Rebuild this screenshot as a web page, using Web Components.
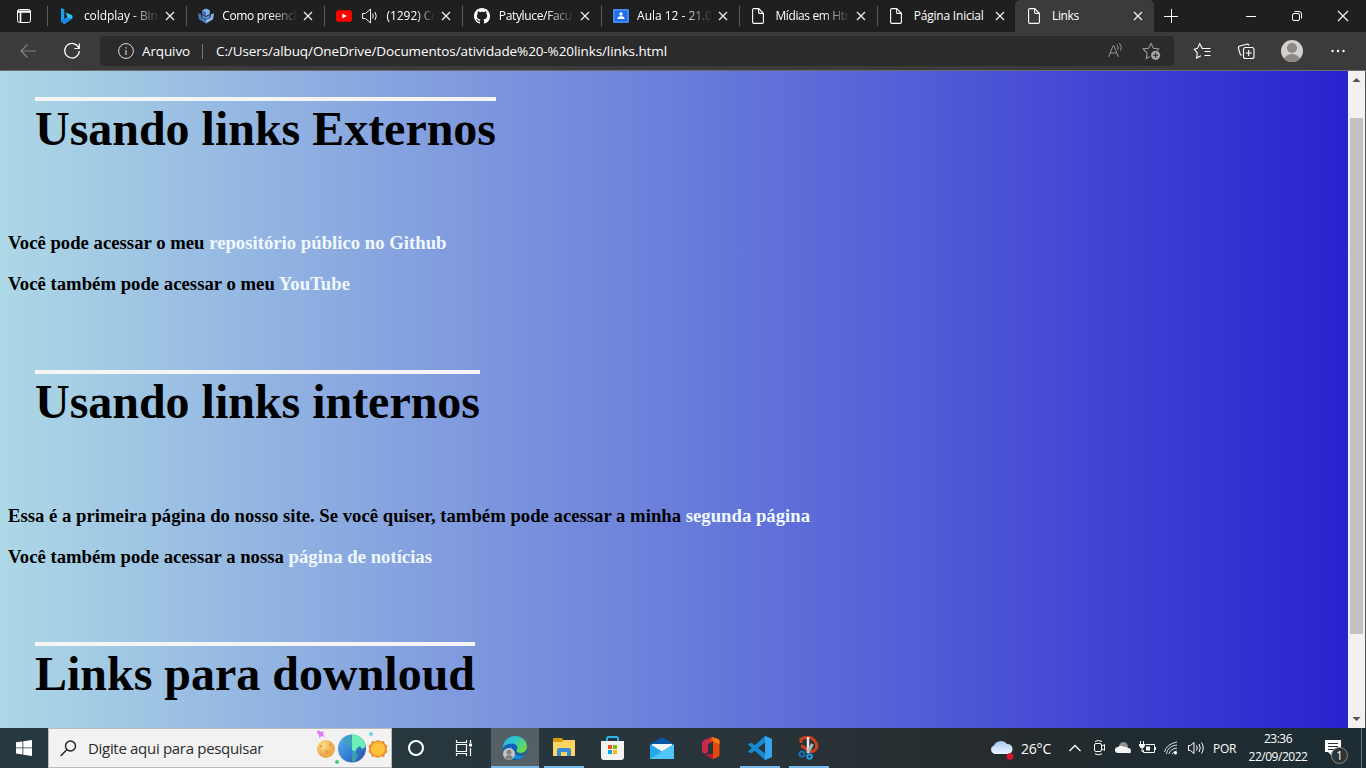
<!DOCTYPE html>
<html lang="pt-BR">
<head>
<meta charset="utf-8">
<title>Links</title>
<style>
html,body{margin:0;height:100%;overflow:hidden}
body{font-family:"Open Sans","Noto Sans",sans-serif;font-size:12px;color:#fff}
</style>
</head>
<body>
<desktop-screen></desktop-screen>
<script>
const define = (name, html) => {
  const t = document.createElement('template');
  t.innerHTML = html;
  customElements.define(name, class extends HTMLElement {
    constructor() {
      super();
      this.attachShadow({mode: 'open'}).appendChild(t.content.cloneNode(true));
    }
  });
};

const PAGE_ICON = '<svg slot="icon" width="16" height="16" viewBox="0 0 16 16" fill="none" stroke="#fff" stroke-width="1.1"><path d="M3 .6h4.700l4.700 4.700v8.800a1.300 1.300 0 0 1-1.300 1.300H2.900a1.300 1.300 0 0 1-1.300-1.300V1.900A1.300 1.300 0 0 1 3 .6zM7.600.8v3.600a1 1 0 0 0 1 1h3.600"/></svg>';

define('browser-tab', `<style>
:host{display:flex;align-items:center;box-sizing:border-box;flex:none;width:138.3px;height:32px;position:relative;padding-left:11px;border-left:1px solid transparent}
:host::before{content:"";position:absolute;left:-1px;top:6px;width:1px;height:20px;background:#5d5d5d}
:host([active]){background:#3b3b3b;border:0;padding-left:12px;border-radius:5px 5px 0 0}
:host([active])::before{display:none}
.label{flex:none;width:74px;margin-left:8.500px;height:20px;line-height:20px;overflow:hidden;white-space:nowrap}
:host([fade]) .label{-webkit-mask-image:linear-gradient(90deg,#000 64%,transparent 102%);mask-image:linear-gradient(90deg,#000 64%,transparent 102%)}
:host([sound]) .label{width:48px}
.sound{display:none;margin-left:9px}
:host([sound]) .sound{display:block}
.x{margin-left:7px;flex:none}
</style><slot name="icon"></slot>
<svg class="sound" width="17" height="16" viewBox="0 0 17 16" fill="none" stroke="#eee"><path d="M1.500 5.500h3L9.500 1v14L4.500 10.500h-3zM11.500 5.500q1.500 2.500 0 5M14 4q2.500 4 0 8"/></svg>
<div class="label"><slot></slot></div>
<svg class="x" width="10" height="10" viewBox="0 0 10 10" stroke="#f2f2f2" stroke-width="1.200"><path d="M1 1l8 8M9 1l-8 8"/></svg>`);

define('tab-strip', `<style>
:host{display:flex;height:32px;background:#1f1f1f;align-items:center}
.menu{width:47.4px;flex:none;height:32px;display:grid;place-items:center}
.tools{flex:1;display:flex;justify-content:space-between}
.new{width:35px;height:32px;display:grid;place-items:center}
.win{display:flex}.win svg{display:block}
</style>
<div class="menu"><svg width="16" height="16" viewBox="0 0 16 16" fill="none" stroke="#fff"><rect x="1.500" y="1.500" width="13" height="13" rx="2"/><path d="M1.500 3.200h13M2 4h12M4.500 4v10" stroke-width="1.600"/></svg></div>
<browser-tab fade><svg slot="icon" width="16" height="16" viewBox="0 0 16 16"><path d="M2 0l3.300 1.200v9.600L2 13z" fill="#1ba0f0"/><path d="M2 13l3.300-2 8-3.200v2.600L5.300 16z" fill="#1479e0"/><path d="M6.500 4.500l6.800 2.800v3.100L5.300 16 2 13l6.500-3.700z" fill="#2fc4f2"/><path d="M5.300 16L2 13l3.400-2 4-1 3.500.6z" fill="#1685ea"/></svg><fit-text w="74">coldplay - Bin</fit-text></browser-tab>
<browser-tab fade><svg slot="icon" width="16" height="16" viewBox="0 0 17 16"><path d="M8.500 0l4 2v4l-4 2-4-2V2z" fill="#7fb2ee"/><path d="M4.500 2l4 2v4l-4-2z" fill="#3f6fb8"/><path d="M0 5l3.500 1.500v3L8.500 12v4L1 11.500z" fill="#4878bd"/><path d="M17 5l-3.500 1.500v3L8.500 12v4L16 11.500z" fill="#8bb4e8"/><path d="M4.500 7l4 2 4-2v2.500l-4 2-4-2z" fill="#5c8fd2"/></svg><fit-text w="74">Como preencl</fit-text></browser-tab>
<browser-tab fade sound><svg slot="icon" width="16" height="16" viewBox="0 0 16 16"><rect y="2.200" width="16" height="11.600" rx="2.600" fill="#f00"/><path d="M6.300 5.500v5l4.400-2.500z" fill="#fff"/></svg><fit-text w="52">(1292) Co</fit-text></browser-tab>
<browser-tab fade><svg slot="icon" width="16" height="16" viewBox="0 0 16 16"><path fill="#fff" d="M8 0C3.580 0 0 3.580 0 8c0 3.540 2.290 6.530 5.470 7.590.4.070.550-.170.550-.380 0-.190-.010-.820-.010-1.490-2.010.370-2.530-.490-2.690-.940-.090-.230-.480-.940-.820-1.130-.280-.150-.680-.520-.010-.530.630-.010 1.080.580 1.230.820.720 1.210 1.870.870 2.330.660.070-.520.280-.870.510-1.070-1.780-.200-3.640-.890-3.640-3.950 0-.870.310-1.590.820-2.150-.080-.200-.360-1.020.080-2.120 0 0 .670-.210 2.200.820.640-.180 1.320-.270 2-.270s1.360.090 2 .270c1.530-1.040 2.200-.820 2.200-.820.440 1.100.160 1.920.080 2.120.510.560.820 1.270.820 2.150 0 3.070-1.870 3.750-3.650 3.950.290.250.540.730.540 1.480 0 1.070-.010 1.930-.010 2.200 0 .210.150.460.550.380A8.010 8.010 0 0 0 16 8c0-4.420-3.580-8-8-8z"/></svg><fit-text w="73">Patyluce/Facu</fit-text></browser-tab>
<browser-tab fade><svg slot="icon" width="16" height="16" viewBox="0 0 16 16"><rect y="1" width="16" height="14" rx="1.300" fill="#4285f4"/><rect x="2" y="3" width="12" height="10" fill="#1c6fe4"/><circle cx="8" cy="6" r="1.700" fill="#fff"/><path d="M4.500 11V10.200C4.500 8.800 6.400 8.200 8 8.200s3.500.6 3.500 2v.8z" fill="#fff"/></svg><fit-text w="75">Aula 12 - 21.0</fit-text></browser-tab>
<browser-tab fade>${PAGE_ICON}<fit-text w="80">Mídias em Htm</fit-text></browser-tab>
<browser-tab>${PAGE_ICON}<fit-text w="70">Página Inicial</fit-text></browser-tab>
<browser-tab active>${PAGE_ICON}<fit-text w="27">Links</fit-text></browser-tab>
<div class="tools"><div class="new"><svg width="14" height="14" viewBox="0 0 14 14" stroke="#fff"><path d="M0 7.500h14M7.500 0v14"/></svg></div>
<div class="win"><svg width="46" height="32" stroke="#fff"><path d="M18 16.500h10"/></svg>
<svg width="46" height="32" fill="none" stroke="#fff"><rect x="18.500" y="13.500" width="7" height="7" rx="1.500"/><path d="M20.500 11.500h4.500q2.500 0 2.500 2.500v4.500"/></svg>
<svg width="46" height="32" stroke="#fff" stroke-width="1.100"><path d="M18 11l10 10M28 11L18 21"/></svg></div></div>`);

define('tool-bar', `<style>
:host{display:flex;height:38px;box-sizing:border-box;background:#3b3b3b;padding:0 6px;align-items:center;font-size:13.500px}
svg{display:block;flex:none}
.addr{display:flex;align-items:center;width:1074px;height:30px;margin:0 6px;background:#2b2b2b;border-radius:4px;box-sizing:border-box;padding-left:18px}
.addr fit-text{line-height:28px}
.kind{margin-left:8px;width:48px;display:flex}
.sep{width:1px;height:15px;background:#777;margin:0 13px 0 12px}
.grow{flex:1}
</style>
<svg width="44" height="38" fill="none" stroke="#818181" stroke-width="1.200"><path d="M30 19H15M21.500 12.500L15 19l6.500 6.500"/></svg>
<svg width="44" height="38" fill="none" stroke="#fff" stroke-width="1.200"><path d="M28.800 16A7.300 7.300 0 1 0 29.300 19M29.300 11.500v5h-5"/></svg>
<div class="addr">
<svg width="16" height="16" fill="none" stroke="#ddd"><circle cx="8" cy="8" r="7.400"/><path d="M8 7v5M8 4.200v1.300" stroke-width="1.100"/></svg>
<div class="kind"><fit-text w="48">Arquivo</fit-text></div><div class="sep"></div><fit-text w="451">C:/Users/albuq/OneDrive/Documentos/atividade%20-%20links/links.html</fit-text>
<div class="grow"></div>
<svg width="36" height="30" fill="none" stroke="#959595"><path d="M11.500 21L16.200 9.500h.6l4.700 11.500M13.200 17h6.600M19.800 8.500q2.200 2 1.100 5M22.300 7q3.200 3.500 1.300 7.500"/></svg>
<svg width="41" height="30" fill="none" stroke="#999" stroke-width="1.100"><path d="M16 20.500l-3.200 2 .8-5.500-4-4 5.500-.8L17.500 7.500l2.500 4.700 5.200.8-1 1.300" transform="translate(.5 0)"/><circle cx="22.600" cy="19.300" r="4.600" fill="#a5a5a5" stroke="none"/><path d="M22.600 16.800v5M20.100 19.300h5" stroke="#2b2b2b"/></svg>
</div>
<svg width="44" height="38" fill="none" stroke="#fff" stroke-width="1.100"><path d="M26 16.500h-3.700l-2.600-4.800-2.200 4.700-3.200.8 3 3.700-.7 5.200 4.300-2.400M24.500 16.500h6M24.500 19.500h6M24.500 23.500h6"/></svg>
<svg width="44" height="38" fill="none" stroke="#fff" stroke-width="1.100"><rect x="19.500" y="15.500" width="10.500" height="11" rx="2"/><path d="M24.700 18v6M21.700 21h6M17.500 23.500l-1.200-1-1.800-6q-.5-2 1.300-2.500l7-1.800q1.700-.3 2.300 1.300"/></svg>
<svg width="48" height="38"><defs><clipPath id="a"><circle cx="24" cy="19" r="11"/></clipPath></defs><circle cx="24" cy="19" r="11" fill="#d2d0ce"/><circle cx="24" cy="16" r="5" fill="#8d8884"/><ellipse cx="24" cy="28" rx="8" ry="6" fill="#8d8884" clip-path="url(#a)"/></svg>
<svg width="44" height="38" fill="#fff"><circle cx="16.500" cy="19" r="1.200"/><circle cx="22" cy="19" r="1.200"/><circle cx="27.500" cy="19" r="1.200"/></svg>`);

define('section-title', `<style>
:host{display:block;padding-left:27px}
h1{display:inline-block;margin:0;border-top:4px solid #f5f5f5;padding-top:1px;font:bold 48px/54px "Liberation Serif",serif;color:#000}
</style><h1><slot></slot></h1>`);

define('link-line', `<style>
:host{display:block;height:41px;font:bold 18.700px/24px "Liberation Serif",serif;color:#000;white-space:nowrap}
::slotted(fit-text){vertical-align:top}
</style><slot></slot>`);

define('web-page', `<style>
:host{display:flex;flex:1;min-height:0;background:#3b3b3b}
main{flex:1;background:linear-gradient(90deg,#add8e6,#2723cf);padding:26px 8px 0;overflow:hidden;box-sizing:border-box}
a{color:#f0f8ff;text-decoration:none}
.bar{width:17px;background:#f1f1f1;display:flex;flex-direction:column;align-items:center;border-right:1px solid #555;box-sizing:content-box}
.thumb{width:13px;height:516px;background:#c1c1c1;margin-bottom:auto}
.group{height:273px;box-sizing:border-box}
.group+.group{height:272px}
section-title{height:134px}
</style>
<main>
<div class="group"><section-title><fit-text w="461">Usando links Externos</fit-text></section-title>
<link-line><fit-text w="438.500">Você pode acessar o meu <a>repositório público no Github</a></fit-text></link-line>
<link-line><fit-text w="342">Você também pode acessar o meu <a>YouTube</a></fit-text></link-line></div>
<div class="group"><section-title><fit-text w="445">Usando links internos</fit-text></section-title>
<link-line><fit-text w="802">Essa é a primeira página do nosso site. Se você quiser, também pode acessar a minha <a>segunda página</a></fit-text></link-line>
<link-line><fit-text w="424">Você também pode acessar a nossa <a>página de notícias</a></fit-text></link-line></div>
<section-title><fit-text w="440">Links para downloud</fit-text></section-title>
</main>
<div class="bar"><svg width="17" height="47"><path d="M4.500 11l4-4 4 4z" fill="#505050"/></svg><div class="thumb"></div><svg width="17" height="17"><path d="M4.500 6l4 4 4-4z" fill="#505050"/></svg></div>`);

define('task-button', `<style>
:host{display:grid;place-items:center;width:48px;margin-right:1px;height:40px;position:relative;flex:none}
:host([open])::after{content:"";position:absolute;left:4px;width:40px;bottom:0;height:2px;background:#76b9ed}
:host([active]){background:linear-gradient(#535f64,#566166)}
:host([active])::after{left:0;width:48px}
</style><slot></slot>`);

define('task-bar', `<style>
:host{display:flex;height:40px;flex:none;align-items:center;background:linear-gradient(90deg,#263940 0,#27373e 30%,#28343a 55%,#262b2c 74%,#1f2c31 84%,#1e2d34)}
svg{display:block;flex:none}
.start{width:48px;display:grid;place-items:center}
.search{width:344px;height:40px;box-sizing:border-box;border:1px solid #bbb;background:#f2f2f2;display:flex;align-items:center;padding-left:11px;color:#2b2b2b;font-size:15px}
.search fit-text{margin-left:11px;line-height:38px}
.pics{margin-left:auto;margin-right:1px}
.gap{width:3px}
.tray{margin-left:auto;display:flex;align-items:center;height:40px}
.temp{font-size:14px;width:31px;margin:0 0 0 7px}
.por{width:24px;margin-left:5px}
.clock{display:flex;flex-direction:column;align-items:center;width:60px;margin-left:11px;line-height:18px;margin-top:-1px}
.bell{position:relative;margin-left:15px;width:38px;height:40px}
.badge{position:absolute;left:8px;top:19px;width:15px;height:15px;border:1px solid #888;border-radius:50%;background:#2e3436;text-align:center;line-height:15px;font-size:12px}
.end{width:1px;height:40px;background:#69757a;margin-right:4px}
</style>
<div class="start"><svg width="16" height="16" fill="#fff"><path d="M0 2.300l6.500-.9v6.100H0zM7.300 1.300L16 0v7.500H7.300zM0 8.300h6.500v6.200L0 13.600zM7.300 8.300H16V16l-8.700-1.200z"/></svg></div>
<div class="search"><svg width="17" height="17" fill="none" stroke="#222" stroke-width="1.400"><circle cx="10.500" cy="6" r="5"/><path d="M7 9.500L.7 16"/></svg><fit-text w="175">Digite aqui para pesquisar</fit-text>
<svg class="pics" width="74" height="38" viewBox="0 0 74 38"><defs><radialGradient id="m" cx=".35" cy=".3"><stop stop-color="#ffe48c"/><stop offset="1" stop-color="#edaa4b"/></radialGradient><linearGradient id="e" x2="1" y2="1"><stop stop-color="#58b8ee"/><stop offset=".5" stop-color="#3683d6"/><stop offset="1" stop-color="#2a4fa5"/></linearGradient></defs>
<path d="M2 1l3 2 3-1-1 3 2 3-3-1-3 2v-3L1 4z" fill="#df7bf2"/><circle cx="10" cy="20" r="9" fill="url(#m)"/><g fill="#e0a045"><circle cx="5" cy="17" r="1.300"/><circle cx="11" cy="23" r="1.800"/><circle cx="14" cy="16" r="1.200"/></g>
<circle cx="36" cy="19.500" r="14" fill="url(#e)"/><path d="M36 5.500q9 0 13 8.500l.5 4-3.500 2-2-3-3 2-2 4-3-2z" fill="#6df0b4"/><path d="M29 8q3-2 7-2.500v13l-3 1-2-4-4-2z" fill="#3f9fc0"/><path d="M36 22l4 1 2 4-3 5-3 1z" fill="#389fae"/>
<circle cx="21" cy="33" r="2" fill="#4ccb76"/><circle cx="55" cy="5" r="2" fill="#6ad8e8"/><path d="M62 11l3 1.500 3-.5 1 3 2.500 2-1 3 1 3-2.500 2-1 3-3-.5-3 1.500-3-1.500-3 .5-1-3-2.500-2 1-3-1-3 2.500-2 1-3 3 .5z" fill="#f38b2b"/><circle cx="62" cy="20" r="7" fill="#fcc33a"/></svg></div>
<svg width="48" height="40" fill="none" stroke="#fff" stroke-width="2"><circle cx="24" cy="20" r="7"/></svg>
<svg width="48" height="40" fill="none" stroke="#fff" stroke-width="1.200"><path d="M16.500 12v2.500h10V12M16.500 28v-2.500h10V28M16.500 16.500h10v7h-10zM30.500 12v3M30.500 20v8"/><path d="M29 15.500h3v3h-3z" fill="#fff" stroke="none"/></svg><div class="gap"></div>
<task-button active open><svg width="26" height="26" viewBox="0 0 26 26"><defs><linearGradient id="g" x2="1" y2=".6"><stop stop-color="#2badea"/><stop offset=".5" stop-color="#31c9c4"/><stop offset="1" stop-color="#6cdb48"/></linearGradient></defs><circle cx="13" cy="13" r="12" fill="#0b63b8"/><path d="M1 13C1 5 7 1 13 1c7 0 12 5 12 10.500 0 4-3 6.500-6.500 6.500-3 0-4.500-1.500-4-3 2-2 .6-6.500-4.500-6.500C6 8.500 2 10 1 13z" fill="url(#g)"/><path d="M9 12q-4 7 3 11 6 3 11-3-5 2-9 0-4-2-4-7z" fill="#1591d9"/><path d="M15 14q-2 3 3 5 3 .6 7-2v2l-3 1q-5 1-8-2-1-2 1-4z" fill="#535f64" opacity=".8"/><circle cx="7" cy="19" r="6" fill="#c9c7c5"/><circle cx="7" cy="17.300" r="2.500" fill="#86817d"/><path d="M3 23q1-3 4-3t4 3q-4 3-8 0z" fill="#86817d"/></svg></task-button>
<task-button open><svg width="22" height="20"><path d="M0 1q0-1 1-1h8l2 3h10v4H0z" fill="#d99a0b"/><path d="M0 4h9l2-2h11v16H0z" fill="#ffd463"/><path d="M4 18v-6q0-2 2-2h10q2 0 2 2v6h-4v-4H8v4z" fill="#398bd2"/></svg></task-button>
<task-button><svg width="24" height="24"><path d="M6 7V2.500Q6 1 7.500 1h8Q17 1 17 2.500V7" fill="none" stroke="#29b5e8" stroke-width="2"/><path d="M0 5h23v16q0 3-3 3H3q-3 0-3-3z" fill="#f3f3f3"/><path d="M7 9h4v4H7z" fill="#f25022"/><path d="M12 9h4v4h-4z" fill="#7fba00"/><path d="M7 14h4v4H7z" fill="#00a4ef"/><path d="M12 14h4v4h-4z" fill="#ffb900"/></svg></task-button>
<task-button><svg width="24" height="24" viewBox="0 0 24 24"><path d="M0 8L12 1l12 7v6H0z" fill="#0a55a5"/><path d="M2 8h20v8H2z" fill="#f5f5f5"/><path d="M0 8l12 7.500L24 8v15H0z" fill="#23a9ec"/><path d="M24 8v15H0l12-7.500z" fill="#51c5f6"/></svg></task-button>
<task-button><svg width="20" height="24" viewBox="0 0 20 24"><path d="M1 7q0-2 2-3l8-3v5L7 8v8l-3 2-3-2z" fill="#c92a48"/><path d="M11 1l6 2q1.500.5 1.500 2v14q0 1.500-1.500 2l-5 2V5L8 6z" fill="#e8480d"/><path d="M11 1l6 2q1.500.5 1.500 2v3L12 6V5z" fill="#f77a10"/><path d="M4 19l3-1h5v5h-1z" fill="#b61c34"/></svg></task-button>
<task-button open><svg width="24" height="24" viewBox="0 0 24 24"><path d="M17 0l7 3v18l-7 3L2 10.500 0 8.500 2 7l2 .2L17 17.500v-11L4 16.700 2 17l-2-1.500z" fill="#168bd2"/><path d="M17 0l7 3v18l-7 3z" fill="#35a5ee"/></svg></task-button>
<task-button open><svg width="22" height="24" viewBox="0 0 22 24" fill="none"><path d="M3 7V3q8-4 13 1 5 6 1 10-4 3-8 0-4-4-6-4" stroke="#c8401c" stroke-width="3"/><path d="M10 1v16" stroke="#e3e5e6" stroke-width="2.500"/><path d="M14.500 8L10 16" stroke="#aeb4b7" stroke-width="3"/><circle cx="4" cy="18" r="2.500" stroke="#1670ba" stroke-width="2"/><circle cx="11.500" cy="20.500" r="2.300" stroke="#1f9be2" stroke-width="2"/></svg></task-button>
<div class="tray">
<svg width="24" height="24" viewBox="0 0 24 24"><defs><linearGradient id="c" x2="0" y2="1"><stop stop-color="#a6c8f3"/><stop offset="1" stop-color="#edf4fd"/></linearGradient></defs><path d="M5 18a5 4.500 0 0 1-1-8.500 A7.500 7 0 0 1 17 8a5 5 0 0 1 1 10z" fill="url(#c)"/><circle cx="20" cy="20.500" r="3.300" fill="#e2102f"/></svg>
<div class="temp"><fit-text w="30">26°C</fit-text></div>
<svg width="24" height="24" viewBox="0 0 24 24" style="margin-left:11px" fill="none" stroke="#fff" stroke-width="1.300"><path d="M6.500 15L12 9.500l5.500 5.500"/></svg>
<svg width="24" height="24" viewBox="0 0 24 24" fill="none" stroke="#fff"><rect x="7.500" y="7.500" width="7" height="8" rx="1.500"/><path d="M14.500 10.500l3-2v6l-3-2M8 5.500q3-2 7 0M8 17.800q3 2 7 0"/></svg>
<svg width="24" height="24" viewBox="0 0 24 24"><path d="M8 12q-.5-5 4-6 4 0 5 4l-3 7z" fill="#8b9193"/><path d="M7 17a3 3 0 0 1 0-6q3-2.500 6 0 2-1.500 4 1 3 0 3 3t-3 2z" fill="#f4f4f4"/></svg>
<svg width="25" height="24" viewBox="0 0 25 24" fill="none" stroke="#fff"><path d="M10.500 8.500h9v8h-11V14M20.500 11v3M5.500 5v3M8.500 5v3M7 11v4.500h2"/><path d="M4 8h6v1.500L8.500 12h-3L4 9.500zM11 10.500h4v4h-4z" fill="#fff" stroke="none"/></svg>
<svg width="24" height="24" viewBox="0 0 24 24" fill="none" stroke="#ddd"><path d="M9 18q1-5 8-6M6.500 18q1-8 10.500-9M4.500 16q2-8 12.500-10M12 18q1-2.500 5-3"/><circle cx="15.500" cy="17" r="1.500" fill="#fff" stroke="none"/></svg>
<svg width="24" height="24" viewBox="0 0 24 24" fill="none" stroke="#fff"><path d="M4.500 9.500h2l3.500-3v11l-3.500-3h-2zM12.500 9.500q1.500 2.500 0 5M15 8q2.500 4 0 8M17.500 6.500q3.500 5.500 0 11"/></svg>
<div class="por"><fit-text w="23">POR</fit-text></div>
<div class="clock"><fit-text w="28">23:36</fit-text><fit-text w="59">22/09/2022</fit-text></div>
<div class="bell"><svg width="18" height="40" fill="#fff"><path d="M2 12h16v12h-9v4l-4-4H2z"/><path d="M5 15.500h10M5 18.500h10M5 21.500h7" stroke="#26343a"/></svg><div class="badge">1</div></div>
<div class="end"></div></div>`);

define('desktop-screen', `<style>
:host{display:flex;flex-direction:column;width:1366px;height:768px;overflow:hidden}
.line{height:1px;background:#6c6c6c;flex:none}
tab-strip,tool-bar{flex:none}
</style><tab-strip></tab-strip><tool-bar></tool-bar><div class="line"></div><web-page></web-page><task-bar></task-bar>`);

/* A single line of text, tracked so that it fills the width given in "w". */
customElements.define('fit-text', class extends HTMLElement {
  constructor() {
    super();
    this.attachShadow({mode: 'open'}).innerHTML = '<style>:host{display:inline-block;white-space:nowrap}</style><slot></slot>';
  }
  connectedCallback() {
    const target = parseFloat(this.getAttribute('w'));
    const natural = this.getBoundingClientRect().width;
    this.style.letterSpacing = (target - natural) / this.textContent.length + 'px';
  }
});
</script>
</body>
</html>
